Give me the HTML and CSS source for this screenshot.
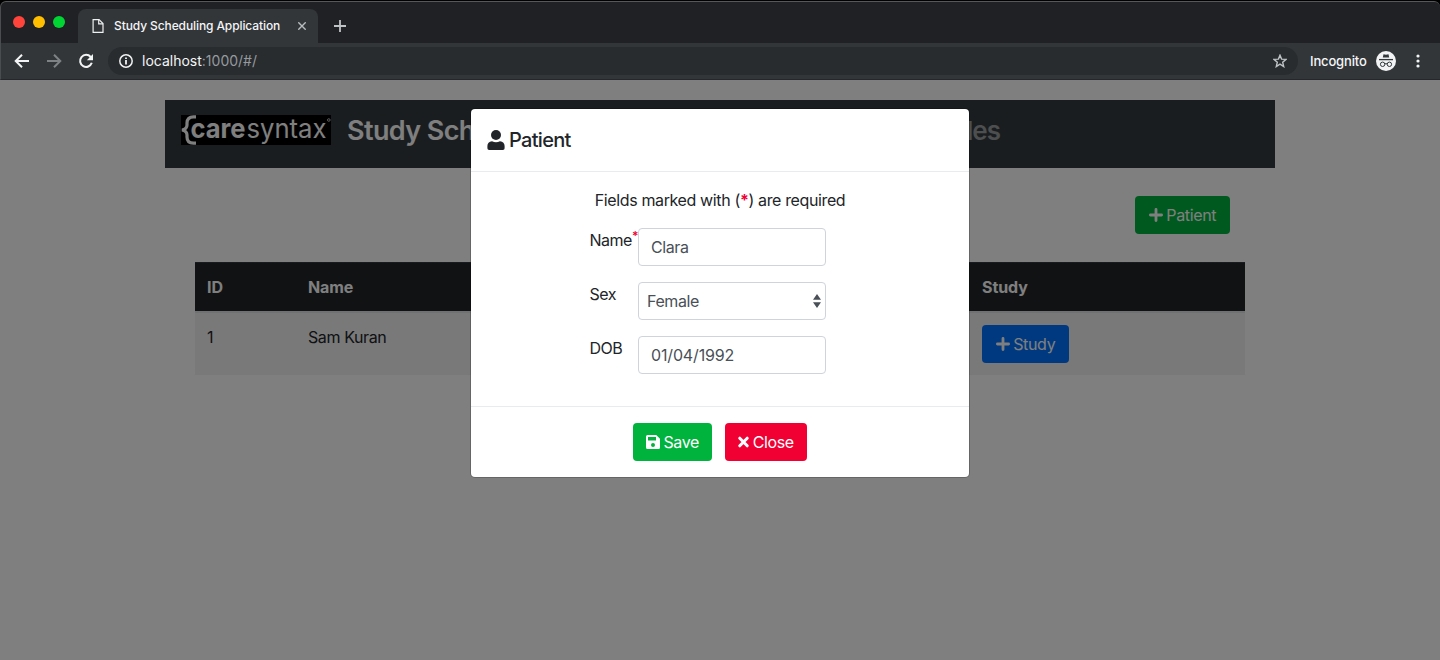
FILE: index.html
```html
<!DOCTYPE html>
<html lang="en">
<head>
<meta charset="utf-8">
<title>Study Scheduling Application</title>
<link rel="stylesheet" href="styles.css">
</head>
<body>
<div class="window">
  <div class="tabstrip">
    <div class="lights"><i class="light red"></i><i class="light yellow"></i><i class="light green"></i></div>
    <div class="tab">
      <svg class="doc" width="12" height="16" viewBox="0 0 12 16" fill="none" stroke="#eef0f1" stroke-width="1.2"><path d="M1.1 1.6H7L11 5.6V14.4H1.1Z"/><path d="M6.7 1.6V5.9H11"/></svg>
      <span class="tab-title">Study Scheduling Application</span>
      <svg class="tab-close" width="8" height="8" viewBox="0 0 8 8" stroke="#b9bcbe" stroke-width="1.4"><path d="M.3 .3L7.7 7.7M7.7 .3L.3 7.7"/></svg>
    </div>
    <svg class="newtab" width="12" height="12" viewBox="0 0 12 12" stroke="#c0c3c6" stroke-width="1.8"><path d="M6 0V12M0 6H12"/></svg>
  </div>
  <div class="toolbar">
    <svg class="nav-icon" width="16" height="16" viewBox="0 0 16 16" fill="none" stroke="#f3f4f5" stroke-width="2"><path d="M15 8H2M8 1.7L1.7 8L8 14.3"/></svg>
    <svg class="nav-icon" width="16" height="16" viewBox="0 0 16 16" fill="none" stroke="#7e8284" stroke-width="2"><path d="M1 8H14M8 1.7L14.3 8L8 14.3"/></svg>
    <svg class="nav-icon" width="16" height="16" viewBox="0 0 16 16"><path d="M12.7 4A6 6 0 1 0 13.8 9.8" fill="none" stroke="#f3f4f5" stroke-width="2"/><path d="M15 1V7.2H8.8Z" fill="#f3f4f5"/></svg>
    <div class="omnibox">
      <svg width="14" height="14" viewBox="0 0 14 14" fill="none" stroke="#f0f1f2"><circle cx="7" cy="7" r="6.2" stroke-width="1.5"/><path d="M7 6V10.4M7 3.4V5" stroke-width="1.8"/></svg>
      <span class="url">localhost<span class="path">:1000/#/</span></span>
      <svg class="star" width="14" height="14" viewBox="0 0 14 14" fill="none" stroke="#bfc2c4" stroke-width="1.4"><path d="M7 1.2L8.6 5.1L13 5.4L9.7 8.2L10.7 12.6L7 10.2L3.3 12.6L4.3 8.2L1 5.4L5.4 5.1Z"/></svg>
    </div>
    <span class="incog">Incognito</span>
    <svg class="spy" width="20" height="20" viewBox="0 0 20 20"><circle cx="10" cy="10" r="10" fill="#f1f3f4"/><path d="M6.8 6.6L7.5 3.2L10 3.7L12.5 3.2L13.2 6.6Z" fill="#33383b"/><path d="M3 8.6H17" stroke="#33383b" stroke-width="1.3"/><g fill="none" stroke="#33383b"><circle cx="6.6" cy="13.3" r="2.2"/><circle cx="13.4" cy="13.3" r="2.2"/><path d="M8.8 13Q10 12.2 11.2 13"/></g></svg>
    <svg class="dots" width="4" height="14" viewBox="0 0 4 14" fill="#f3f4f5"><circle cx="2" cy="2" r="1.6"/><circle cx="2" cy="7" r="1.6"/><circle cx="2" cy="12" r="1.6"/></svg>
  </div>
  <main class="page">
    <div class="container">
      <header class="navbar">
        <svg class="logo" width="150" height="30" viewBox="0 0 150 30">
          <rect width="150" height="30" fill="#000"/>
          <path d="M15 1.8H12.5Q6 1.8 6 8V10Q6 14 1 15Q6 16 6 20V22Q6 28.2 12.5 28.2H15" fill="none" stroke="#fff" stroke-width="3.2"/>
          <text class="logo-bold" x="9.5" y="22.5" textLength="55" lengthAdjust="spacingAndGlyphs">care</text>
          <text class="logo-thin" x="65.5" y="22.5" textLength="80" lengthAdjust="spacingAndGlyphs">syntax</text>
          <circle cx="147.8" cy="5" r="1.3" fill="none" stroke="#bbb" stroke-width="1"/>
        </svg>
        <span class="brand">Study Scheduling</span>
        <span class="nav-link">Schedules</span>
      </header>
      <div class="content">
        <div class="actions"><button class="btn green-btn"><svg class="ico" width="14" height="14" viewBox="0 0 14 14" stroke="#fff" stroke-width="2.8" stroke-linecap="round"><path d="M7 1.4V12.6M1.4 7H12.6"/></svg><span>Patient</span></button></div>
        <div class="table">
          <div class="row head"><span class="id">ID</span><span class="name">Name</span><span class="study">Study</span></div>
          <div class="row body"><span class="id">1</span><span class="name">Sam Kuran</span><span class="study"><button class="btn blue-btn"><svg class="ico" width="14" height="14" viewBox="0 0 14 14" stroke="#fff" stroke-width="2.8" stroke-linecap="round"><path d="M7 1.4V12.6M1.4 7H12.6"/></svg><span>Study</span></button></span></div>
        </div>
      </div>
    </div>
    <div class="backdrop"></div>
    <section class="modal">
      <div class="modal-head"><svg width="18" height="20" viewBox="0 0 18 20" fill="#212529"><circle cx="9" cy="5" r="5"/><path d="M5 11.2Q9 13.2 13 11.2C16 11.3 17.6 13.4 17.6 16V18.3Q17.6 20 15.9 20H2.1Q.4 20 .4 18.3V16C.4 13.4 2 11.3 5 11.2Z"/></svg><h5>Patient</h5></div>
      <div class="modal-body">
        <p class="note">Fields marked with (<b>*</b>) are required</p>
        <div class="field"><label>Name<sup>*</sup></label><div class="input">Clara</div></div>
        <div class="field"><label>Sex</label><div class="input select"><span>Female</span><svg width="8" height="14" viewBox="0 0 8 14" fill="#495057"><path d="M0 5.8L4 0L8 5.8ZM0 8.3L4 14L8 8.3Z"/></svg></div></div>
        <div class="field"><label>DOB</label><div class="input date">01/04/1992</div></div>
      </div>
      <div class="modal-foot">
        <button class="btn save"><svg class="ico" width="14" height="14" viewBox="0 0 14 14"><path fill="#fff" fill-rule="evenodd" d="M1.5 0H10.2L14 3.8V12.5Q14 14 12.5 14H1.5Q0 14 0 12.5V1.5Q0 0 1.5 0ZM2 2V5.5H10V2ZM7 8A2 2 0 1 0 7 12A2 2 0 1 0 7 8Z"/></svg><span>Save</span></button>
        <button class="btn close"><svg class="ico" width="11" height="12" viewBox="0 0 11 12" stroke="#fff" stroke-width="3" stroke-linecap="round"><path d="M1.8 2.2L9.2 9.8M9.2 2.2L1.8 9.8"/></svg><span>Close</span></button>
      </div>
    </section>
  </main>
</div>
</body>
</html>
```
FILE: styles.css
```css
* { box-sizing: border-box; }
body { margin: 0; background: #000; font: 16px/24px Inter, "Liberation Sans", sans-serif; color: #212529; letter-spacing: -0.4px; }
svg { display: block; flex: none; }
.window { height: 660px; margin: 0; overflow: hidden; display: flex; flex-direction: column; border-top: 1px solid #000; }
.tabstrip { height: 42px; background: #202124; border-top: 1px solid #55575a; border-left: 1px solid #4a4c4f; border-radius: 6px 6px 0 0; display: flex; align-items: flex-start; flex: none; }
.lights { display: flex; gap: 8px; padding: 14px 0 0 12px; width: 77px; }
.light { width: 12px; height: 12px; border-radius: 50%; }
.red { background: #ff443b; }
.yellow { background: #ffbf00; }
.green { background: #00d534; }
.tab { width: 240px; height: 34px; margin-top: 7px; background: #323639; border-radius: 8px 8px 0 0; display: flex; align-items: center; color: #f4f5f6; font-size: 12px; padding-left: 14px; }
.tab-title { letter-spacing: -.1px; margin-left: 10px; width: 184px; white-space: nowrap; font-weight: 500; }
.newtab { margin: 18px 0 0 16px; }
.toolbar { height: 37px; flex: none; background: #323639; border-bottom: 1px solid #25282a; border-left: 1px solid #4a4c4f; display: flex; align-items: center; padding-left: 13px; }
.nav-icon { margin-right: 16px; }
.omnibox { width: 1190px; height: 28px; border-radius: 14px; background: #282c2f; display: flex; align-items: center; padding: 0 11px; margin-left: -2px; }
.url { margin-left: 9px; font-size: 14px; color: #f4f5f6; letter-spacing: 0; }
.path { color: #969a9e; }
.star { margin-left: auto; }
.incog { color: #f4f5f6; font-size: 13px; margin-left: 12px; letter-spacing: -.15px; width: 66px; font-weight: 500; }
.dots { margin-left: 20px; }
.page { position: relative; flex: 1; background: #fff; }
.container { width: 1110px; margin: 0 auto; padding-top: 20px; }
.navbar { height: 68px; background: #343a40; padding: 14px 16px 0; display: flex; align-items: flex-start; color: #fff; font-size: 27px; line-height: 34px; font-weight: 600; letter-spacing: -.6px; }
.logo { margin-top: 1px; }
.logo-bold, .logo-thin { font-family: Inter, sans-serif; font-size: 27px; letter-spacing: 0; fill: #fff; }
.logo-bold { font-weight: 700; }
.logo-thin { font-weight: 400; }
.brand { margin-left: 16px; width: 488px; }
.nav-link { width: 165px; text-align: right; color: #999c9f; font-size: 26px; letter-spacing: -1px; }
.content { padding: 28px 30px 0; }
.actions { display: flex; justify-content: flex-end; padding-right: 15px; }
.btn { height: 38px; border: 0; border-radius: 4px; padding: 0; color: #fff; font: inherit; letter-spacing: -.35px; display: flex; align-items: center; justify-content: center; gap: 3.5px; white-space: nowrap; }
.green-btn { width: 95px; background: #00b33c; }
.blue-btn { width: 87px; background: #0073ff; }
.table { margin-top: 28px; }
.row { display: grid; grid-template-columns: 101px 674px 275px; }
.row > span { padding-left: 12px; }
.head { height: 49px; background: #212529; border-top: 1px solid #32383e; color: #fff; font-weight: 700; align-items: center; letter-spacing: -.1px; }
.body { height: 64px; background: #f2f2f2; border-top: 2px solid #dee2e6; padding-top: 12px; }
.backdrop { position: absolute; inset: 0; background: rgba(0,0,0,.5); }
.modal { position: absolute; left: 471px; top: 29px; width: 498px; height: 368px; background: #fff; border-radius: 4px; box-shadow: 0 0 0 1px rgba(0,0,0,.2); }
.modal-head { height: 63px; border-bottom: 1px solid #e9ecef; display: flex; align-items: center; gap: 4px; padding-left: 16px; }
h5 { margin: 0; font-size: 20px; font-weight: 500; letter-spacing: -.7px; }
.modal-body { height: 234px; padding-top: 16px; }
.note { margin: 0 0 16px; text-align: center; letter-spacing: -.37px; }
.note b, sup { color: #f00033; }
sup { font-size: 12px; font-weight: 600; line-height: 0; vertical-align: 6px; }
.field { display: flex; margin: 0 0 16px 118.5px; }
label { flex: 0 0 48.5px; white-space: nowrap; letter-spacing: -.48px; }
.input { width: 188px; height: 38px; border: 1px solid #ced4da; border-radius: 4px; padding: 6px 12px; color: #495057; }
.date { letter-spacing: -.15px; }
.select { padding: 6px 4px 6px 8px; display: flex; justify-content: space-between; align-items: center; }
.modal-foot { height: 71px; border-top: 1px solid #e9ecef; display: flex; justify-content: center; align-items: center; gap: 13px; }
.save { width: 79px; background: #00b33c; }
.close { width: 82px; background: #f00033; }
```
